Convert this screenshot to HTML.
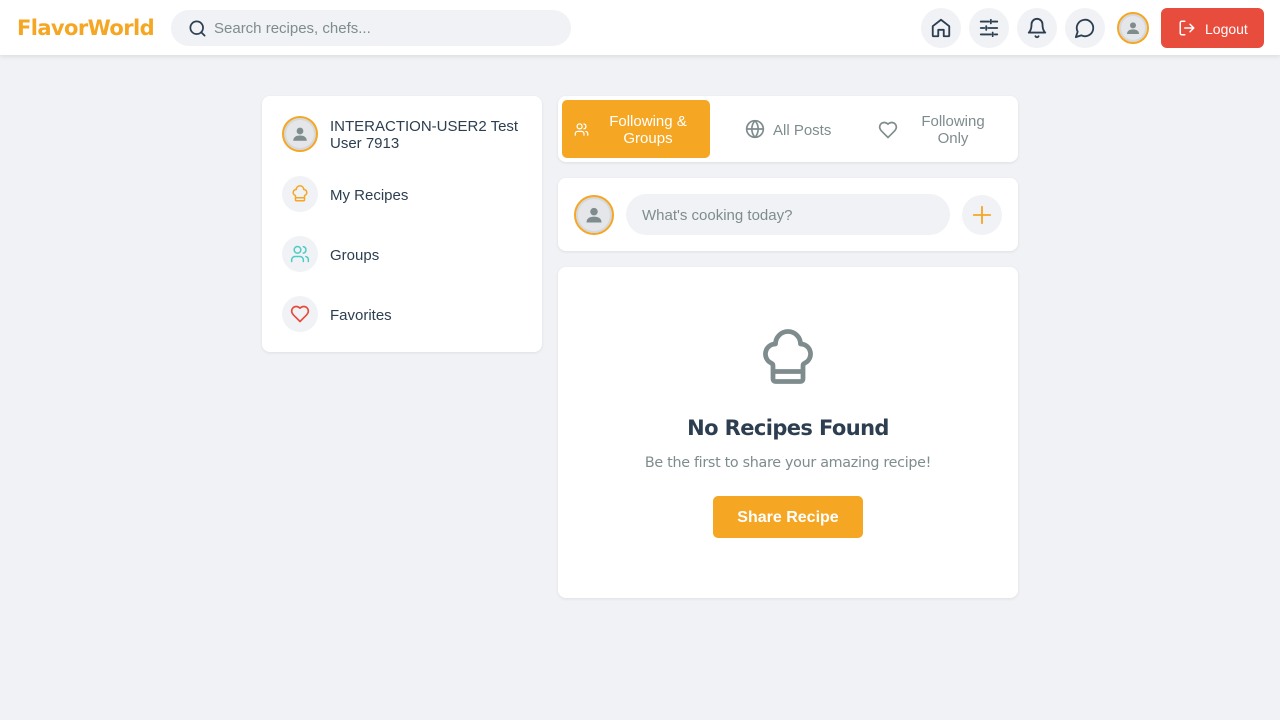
<!DOCTYPE html>
<html><head><meta charset="utf-8">
<style>
*{box-sizing:border-box;margin:0;padding:0}
body{width:1280px;height:720px;background:#f0f2f5;font-family:"Liberation Sans",sans-serif;color:#2c3e50;position:relative;overflow:hidden}
.hdr{position:absolute;left:0;top:0;width:1280px;height:55px;background:#fff;box-shadow:0 2px 4px rgba(0,0,0,.08)}
.logo{position:absolute;left:17px;top:16px;font-family:"DejaVu Sans",sans-serif;font-weight:bold;font-size:21px;color:#f5a623;letter-spacing:-0.6px}
.search{position:absolute;left:171px;top:10px;width:400px;height:36px;background:#f0f2f5;border-radius:18px}
.search span{position:absolute;left:43px;top:10px;font-size:15px;color:#7f8c8d}
.ib{position:absolute;top:8px;width:40px;height:40px;border-radius:50%;background:#f0f2f5;display:flex;align-items:center;justify-content:center}
.av{border-radius:50%;border:2.5px solid #f5a623;background:#e4e6e9;display:flex;align-items:center;justify-content:center;position:absolute;box-shadow:inset 0 0 0 2px #d5d8dc}
.logout{position:absolute;left:1161px;top:8px;width:103px;height:40px;background:#e74c3c;border-radius:6px;color:#fff;font-size:14px}
.card{position:absolute;background:#fff;border-radius:8px;box-shadow:0 1px 3px rgba(0,0,0,.08)}
.row{position:absolute;left:20px;display:flex;align-items:center}
.ic{width:36px;height:36px;border-radius:50%;background:#f0f2f5;display:flex;align-items:center;justify-content:center}
.row span{margin-left:12px;font-size:15px;color:#2c3e50;position:relative;top:1px}
</style></head><body>
<div class="hdr">
<div class="logo">FlavorWorld</div>
<div class="search">
<svg style="position:absolute;left:17px;top:9px" width="19" height="19" viewBox="0 0 24 24" fill="none" stroke="#2c3e50" stroke-width="2.2" stroke-linecap="round"><circle cx="11" cy="11" r="8"/><path d="M21 21l-4.3-4.3"/></svg>
<span>Search recipes, chefs...</span></div>
<div class="ib" style="left:921px"><svg width="22" height="22" viewBox="0 0 24 24" fill="none" stroke="#2c3e50" stroke-width="2" stroke-linejoin="round"><path d="M3 10l9-7 9 7v10a1 1 0 0 1-1 1h-5v-7H9v7H4a1 1 0 0 1-1-1z"/></svg></div>
<div class="ib" style="left:969px"><svg width="22" height="22" viewBox="0 0 24 24" fill="none" stroke="#2c3e50" stroke-width="2" stroke-linecap="round"><path d="M3 5h9M16 5h5M14 3v4M3 12h4M11 12h10M9 10v4M3 19h11M18 19h3M16 17v4"/></svg></div>
<div class="ib" style="left:1017px"><svg width="22" height="22" viewBox="0 0 24 24" fill="none" stroke="#2c3e50" stroke-width="2" stroke-linecap="round" stroke-linejoin="round"><path d="M6 8a6 6 0 0 1 12 0c0 7 3 9 3 9H3s3-2 3-9M10.3 21a1.9 1.9 0 0 0 3.4 0"/></svg></div>
<div class="ib" style="left:1065px"><svg width="22" height="22" viewBox="0 0 24 24" fill="none" stroke="#2c3e50" stroke-width="2" stroke-linejoin="round"><path d="M7.9 20A9 9 0 1 0 4 16.1L2 22z"/></svg></div>
<div class="av" style="left:1117px;top:12px;width:32px;height:32px"><svg width="16" height="16" viewBox="0 0 24 24" fill="#7f8c8d"><circle cx="12" cy="8" r="4.5"/><path d="M3 21c0-5 4-7 9-7s9 2 9 7z"/></svg></div>
<div class="logout"><svg style="position:absolute;left:17px;top:11px" width="18" height="18" viewBox="0 0 24 24" fill="none" stroke="#fff" stroke-width="2" stroke-linecap="round" stroke-linejoin="round"><path d="M9 21H5a2 2 0 0 1-2-2V5a2 2 0 0 1 2-2h4M16 17l5-5-5-5M21 12H9"/></svg><span style="position:absolute;left:44px;top:13px">Logout</span></div>
</div>

<div class="card" style="left:262px;top:96px;width:280px;height:256px">
<div class="row" style="top:20px"><div class="av" style="position:relative;width:36px;height:36px"><svg width="18" height="18" viewBox="0 0 24 24" fill="#7f8c8d"><circle cx="12" cy="8" r="4.5"/><path d="M3 21c0-5 4-7 9-7s9 2 9 7z"/></svg></div><span style="line-height:17px">INTERACTION-USER2 Test<br>User 7913</span></div>
<div class="row" style="top:80px"><div class="ic"><svg width="18" height="18" viewBox="0 0 24 24" fill="none" stroke="#f5a623" stroke-width="2" stroke-linejoin="round"><path d="M17 21a1 1 0 0 0 1-1v-5.35c0-.46.31-.85.74-1.04A4 4 0 0 0 17 6a5 5 0 0 0-10 0 4 4 0 0 0-1.74 7.61c.43.19.74.58.74 1.04V20a1 1 0 0 0 1 1zM6 17h12"/></svg></div><span>My Recipes</span></div>
<div class="row" style="top:140px"><div class="ic"><svg width="20" height="20" viewBox="0 0 24 24" fill="none" stroke="#4ecdc4" stroke-width="1.8" stroke-linecap="round"><path d="M16 21v-2a4 4 0 0 0-4-4H6a4 4 0 0 0-4 4v2"/><circle cx="9" cy="7" r="4"/><path d="M22 21v-2a4 4 0 0 0-3-3.9M16 3.1a4 4 0 0 1 0 7.8"/></svg></div><span>Groups</span></div>
<div class="row" style="top:200px"><div class="ic"><svg width="20" height="20" viewBox="0 0 24 24" fill="none" stroke="#e74c3c" stroke-width="2" stroke-linejoin="round"><path d="M19 14c1.5-1.5 3-3.2 3-5.5A5.5 5.5 0 0 0 16.5 3c-1.8 0-3 .5-4.5 2-1.5-1.5-2.7-2-4.5-2A5.5 5.5 0 0 0 2 8.5c0 2.3 1.5 4 3 5.5l7 7z"/></svg></div><span>Favorites</span></div>
</div>

<div class="card" style="left:558px;top:96px;width:460px;height:66px">
<div style="position:absolute;left:4px;top:4px;width:148px;height:58px;background:#f5a623;border-radius:5px;color:#fff;font-size:15px">
<svg style="position:absolute;left:12px;top:22px" width="15" height="15" viewBox="0 0 24 24" fill="none" stroke="#fff" stroke-width="2" stroke-linecap="round"><path d="M16 21v-2a4 4 0 0 0-4-4H6a4 4 0 0 0-4 4v2"/><circle cx="9" cy="7" r="4"/><path d="M22 21v-2a4 4 0 0 0-3-3.9M16 3.1a4 4 0 0 1 0 7.8"/></svg>
<div style="position:absolute;left:38px;width:96px;top:13px;text-align:center;line-height:17px">Following &amp;<br>Groups</div></div>
<svg style="position:absolute;left:187px;top:23px" width="20" height="20" viewBox="0 0 24 24" fill="none" stroke="#7f8c8d" stroke-width="2"><circle cx="12" cy="12" r="10"/><path d="M2 12h20M12 2a15 15 0 0 1 0 20M12 2a15 15 0 0 0 0 20"/></svg>
<span style="position:absolute;left:215px;top:26px;font-size:15px;color:#7f8c8d">All Posts</span>
<svg style="position:absolute;left:320px;top:24px" width="20" height="20" viewBox="0 0 24 24" fill="none" stroke="#7f8c8d" stroke-width="2" stroke-linejoin="round"><path d="M19 14c1.5-1.5 3-3.2 3-5.5A5.5 5.5 0 0 0 16.5 3c-1.8 0-3 .5-4.5 2-1.5-1.5-2.7-2-4.5-2A5.5 5.5 0 0 0 2 8.5c0 2.3 1.5 4 3 5.5l7 7z"/></svg>
<div style="position:absolute;left:350px;width:90px;top:17px;text-align:center;line-height:17px;font-size:15px;color:#7f8c8d">Following<br>Only</div>
</div>

<div class="card" style="left:558px;top:178px;width:460px;height:73px">
<div class="av" style="left:16px;top:17px;width:40px;height:40px"><svg width="20" height="20" viewBox="0 0 24 24" fill="#7f8c8d"><circle cx="12" cy="8" r="4.5"/><path d="M3 21c0-5 4-7 9-7s9 2 9 7z"/></svg></div>
<div style="position:absolute;left:68px;top:16px;width:324px;height:41px;background:#f0f2f5;border-radius:21px;font-size:15px;color:#7f8c8d;padding:13px 16px">What's cooking today?</div>
<div style="position:absolute;left:404px;top:17px;width:40px;height:40px;border-radius:50%;background:#f0f2f5"><svg style="position:absolute;left:9px;top:9px" width="22" height="22" viewBox="0 0 24 24" fill="none" stroke="#f5a623" stroke-width="2" stroke-linecap="round"><path d="M12 3v18M3 12h18"/></svg></div>
</div>

<div class="card" style="left:558px;top:267px;width:460px;height:331px">
<svg style="position:absolute;left:200px;top:62px" width="60" height="60" viewBox="0 0 24 24" fill="none" stroke="#7f8c8d" stroke-width="1.9" stroke-linejoin="round"><path d="M17 21a1 1 0 0 0 1-1v-5.35c0-.46.31-.85.74-1.04A4 4 0 0 0 17 6a5 5 0 0 0-10 0 4 4 0 0 0-1.74 7.61c.43.19.74.58.74 1.04V20a1 1 0 0 0 1 1zM6 17h12"/></svg>
<div style="position:absolute;left:0;width:460px;top:149px;text-align:center;font-family:'DejaVu Sans',sans-serif;font-weight:bold;font-size:21px;color:#2c3e50;letter-spacing:-0.6px">No Recipes Found</div>
<div style="position:absolute;left:0;width:460px;top:188px;text-align:center;font-family:'DejaVu Sans',sans-serif;font-size:14.3px;color:#7f8c8d;letter-spacing:-0.3px">Be the first to share your amazing recipe!</div>
<div style="position:absolute;left:155px;top:229px;width:150px;height:42px;background:#f5a623;border-radius:5px;color:#fff;font-weight:bold;font-size:16px;text-align:center;line-height:43px">Share Recipe</div>
</div>
</body></html>
